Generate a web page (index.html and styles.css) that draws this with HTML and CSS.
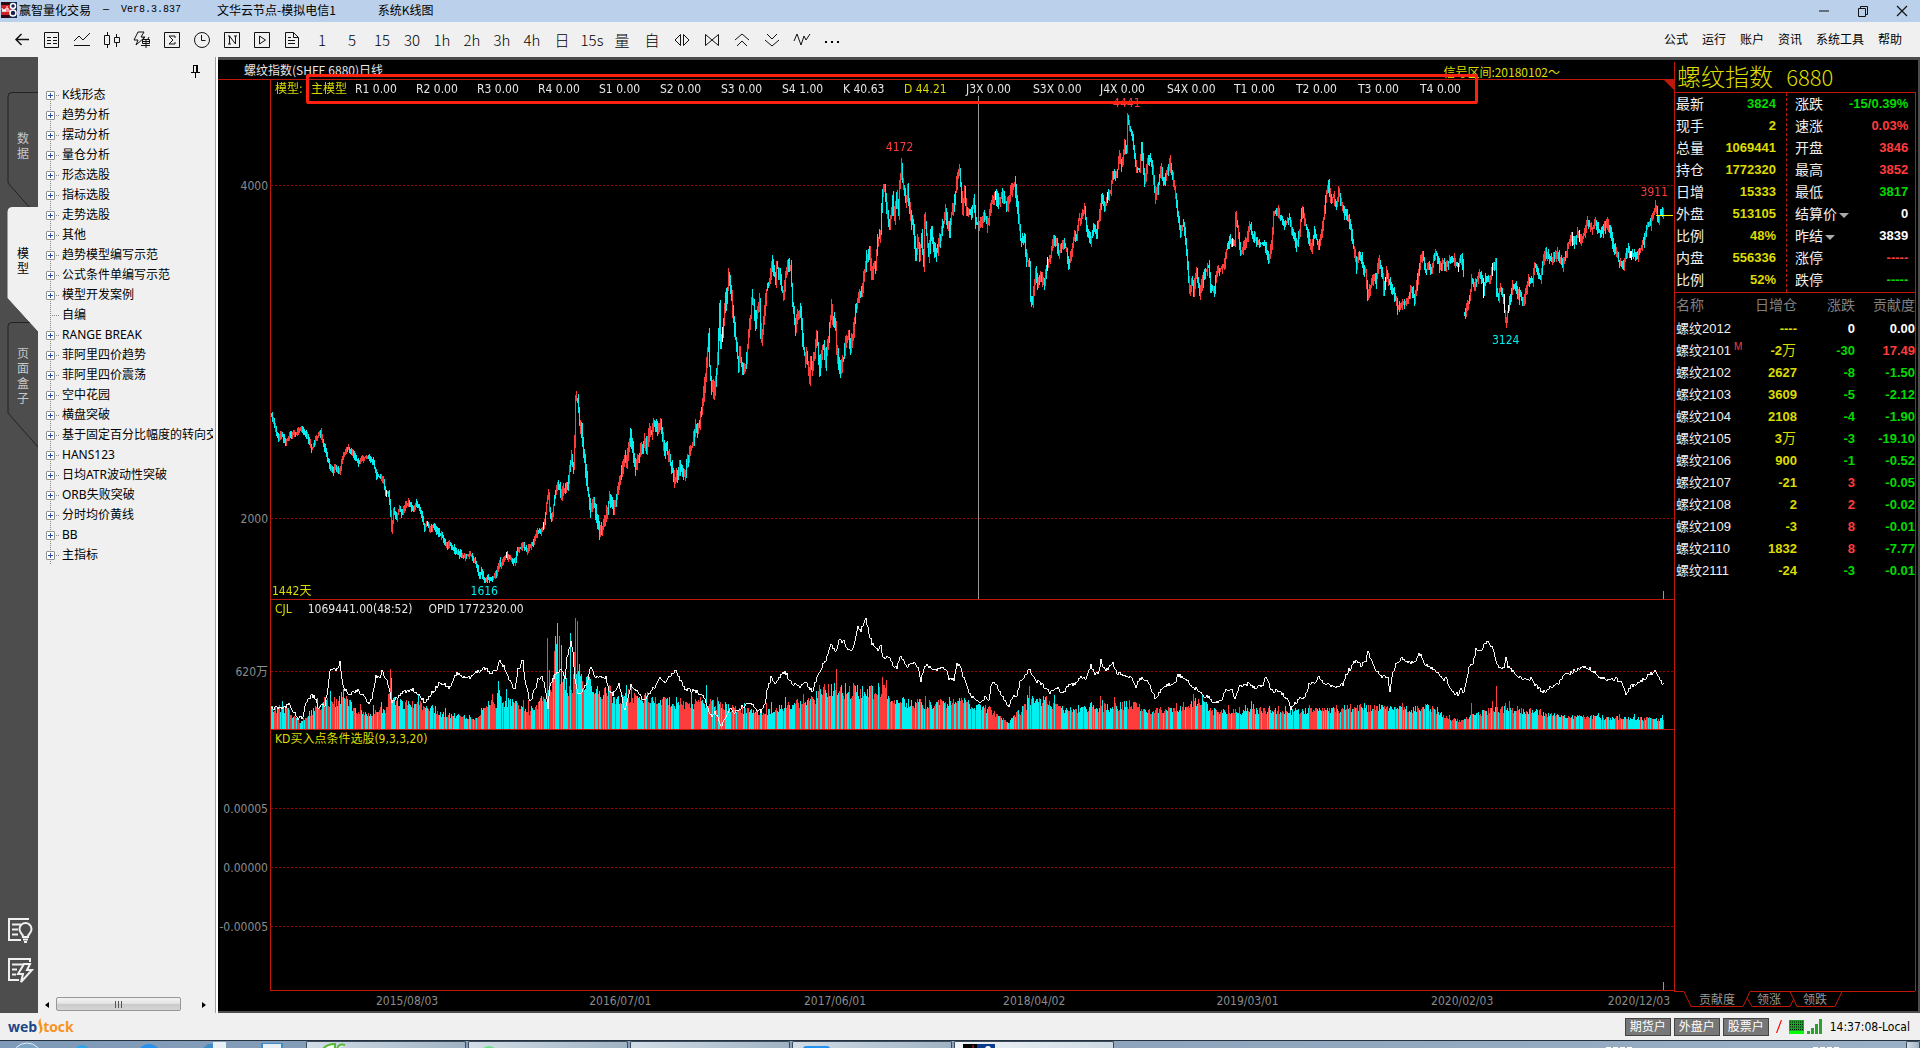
FILE: index.html
```html
<!DOCTYPE html>
<html lang="zh-CN">
<head>
<meta charset="utf-8">
<title>赢智量化交易</title>
<link rel="stylesheet" href="styles.css">
</head>
<body>
<header class="titlebar">
  <svg class="logo" width="16" height="16" viewBox="0 0 16 16"><rect width="16" height="16" fill="#16244f"/><rect y="3" width="10" height="10" fill="#d3202a"/><path d="M0 0h9v3H0zM0 13h8v3H0z" fill="#280c14"/><path d="M1 6l1 4 1-3 1 3 1-4M6 4v6M6 7q2-1 2 1v2" stroke="#fff" fill="none"/><circle cx="12" cy="4" r="2.500" stroke="#fff" fill="none" stroke-width="1.500"/><circle cx="12" cy="11" r="3" stroke="#fff" fill="none" stroke-width="1.500"/></svg>
  <span class="app-name">赢智量化交易</span><span class="app-version">— &nbsp;Ver8.3.837</span><span class="node-name">文华云节点-模拟电信1</span><span class="view-name">系统K线图</span>
  <div class="window-buttons">
    <button aria-label="最小化"><svg width="12" height="12"><path d="M1 6h10" stroke="#111"/></svg></button>
    <button aria-label="还原"><svg width="12" height="12"><path d="M1.500 3.500h7v8h-7zM3.500 3.500v-2h7v8h-2" fill="none" stroke="#111"/></svg></button>
    <button aria-label="关闭"><svg width="12" height="12"><path d="M1 1l10 10M11 1L1 11" stroke="#111" stroke-width="1.200"/></svg></button>
  </div>
</header>

<nav class="toolbar">
  <div class="tools">
    <button aria-label="返回"><svg width="18" height="18"><path d="M3 8.500h13M8.500 3L3 8.500l5.500 5.500" class="ink wide"/></svg></button>
    <button aria-label="报价"><svg width="18" height="18"><path d="M1.500 1.500h14v15h-14zM4 6.500h4M10 6.500h4M4 9.500h4M10 9.500h4M4 12.500h4M10 12.500h4" class="ink"/></svg></button>
    <button aria-label="分时"><svg width="18" height="18"><path d="M1 10l5-5 4 4 7-7M1 14.500h16" class="ink"/></svg></button>
    <button aria-label="K线"><svg width="18" height="18"><path d="M1.500 4.500h5v9h-5zM4.500 1v3M4.500 13v4M11.500 6.500h5v5h-5zM13.500 3v3M13.500 12v4" class="ink"/></svg></button>
    <button aria-label="闪电下单"><svg width="18" height="18"><path d="M5 1h6L8 6h4L3 14l2-5H1zM9.500 8.500h7v4h-7zM9.500 10.500h7M13 8v9M8 14.500h9M10 6l1 2M16 6l-1 2" class="ink"/></svg></button>
    <button aria-label="求和"><svg width="18" height="18"><path d="M1.500 1.500h15v15h-15zM12 7V5H6l4 4-4 4h6v-2" class="ink"/></svg></button>
    <button aria-label="时钟"><svg width="18" height="18"><circle cx="9" cy="9" r="7.500" class="ink"/><path d="M8.500 4v5.500h4" class="ink"/></svg></button>
    <button aria-label="新建"><svg width="18" height="18"><path d="M1.500 1.500h15v15h-15zM6.500 13V5l6 8V5M5 5h2M11 5h3M5 13h3" class="ink"/></svg></button>
    <button aria-label="播放"><svg width="18" height="18"><path d="M1.500 1.500h15v15h-15zM6.500 5v8l6-4z" class="ink"/></svg></button>
    <button aria-label="文档"><svg width="18" height="18"><path d="M2.500 1.500h8l5 5v10h-13zM10.500 1.500v5h5M5 6.500h3M5 9.500h7M5 12.500h7" class="ink"/></svg></button>
    <button>1</button><button>5</button><button>15</button><button>30</button><button>1h</button><button>2h</button><button>3h</button><button>4h</button><button>日</button><button>15s</button><button>量</button><button>自</button>
    <button aria-label="放大"><svg width="18" height="18"><path d="M7.500 3.500v11L2 9zM10.500 3.500v11L16 9z" class="ink"/></svg></button>
    <button aria-label="缩小"><svg width="18" height="18"><path d="M2.500 3.500v11L9 9zM15.500 3.500v11L9 9z" class="ink"/></svg></button>
    <button aria-label="上移"><svg width="18" height="18"><path d="M2 9l7-6 7 6M4 15l5-5 5 5" class="ink"/></svg></button>
    <button aria-label="下移"><svg width="18" height="18"><path d="M4 3l5 5 5-5M2 9l7 6 7-6" class="ink"/></svg></button>
    <button aria-label="指标"><svg width="18" height="18"><path d="M1 10l3-7 4 11 3-9 2 4 4-6" class="ink"/></svg></button>
    <button aria-label="更多"><svg width="18" height="18"><path d="M2 10h2v2H2zM8 10h2v2H8zM14 10h2v2h-2z"/></svg></button>
  </div>
  <div class="menu"><a href="#">公式</a><a href="#">运行</a><a href="#">账户</a><a href="#">资讯</a><a href="#">系统工具</a><a href="#">帮助</a></div>
</nav>

<main class="workspace">
  <aside class="rail">
    <button class="rail-tab"><svg class="rail-shape" width="38" height="126"><path d="M38 .5H12q-4 0-4 4V91l30 34"/></svg><span>数据</span></button>
    <button class="rail-tab active"><svg class="rail-shape" width="38" height="126"><path d="M39 .5H12q-4 0-4 4V91l31 34z"/></svg><span>模型</span></button>
    <button class="rail-tab"><svg class="rail-shape" width="38" height="126"><path d="M38 .5H12q-4 0-4 4V91l30 34"/></svg><span>页面盒子</span></button>
    <div class="rail-tools">
      <button aria-label="提示"><svg width="26" height="26"><path d="M13 22H1V1h20M4 6.500h9M4 11.500h6M4 16.500h6"/><path d="M15 19q0-2-2-4a6 6 0 1 1 9 0q-2 2-2 4zM15 21.500h5M16 24h3"/></svg></button>
      <button aria-label="快速"><svg width="26" height="26"><path d="M11 22H1V1h21v3M4 6.500h12M4 11.500h5M4 16.500h4"/><path d="M16 6h6l-3 6h5L13 24l2-8h-5z"/></svg></button>
    </div>
  </aside>

  <section class="tree-panel">
    <div class="tree-head"><button aria-label="固定"><svg width="9" height="13"><path d="M2.500 0v7M0 7.500h9M4.500 8v5M2 .5h5" stroke="#000"/><path d="M6 0v7" stroke="#000" stroke-width="2"/></svg></button></div>
    <ul class="tree">
      <li><button>+</button>K线形态</li><li><button>+</button>趋势分析</li><li><button>+</button>摆动分析</li><li><button>+</button>量仓分析</li><li><button>+</button>形态选股</li><li><button>+</button>指标选股</li><li><button>+</button>走势选股</li><li><button>+</button>其他</li><li><button>+</button>趋势模型编写示范</li><li><button>+</button>公式条件单编写示范</li><li><button>+</button>模型开发案例</li><li class="leaf">自编</li><li><button>+</button>RANGE BREAK</li><li><button>+</button>菲阿里四价趋势</li><li><button>+</button>菲阿里四价震荡</li><li><button>+</button>空中花园</li><li><button>+</button>横盘突破</li><li><button>+</button>基于固定百分比幅度的转向交易</li><li><button>+</button>HANS123</li><li><button>+</button>日均ATR波动性突破</li><li><button>+</button>ORB失败突破</li><li><button>+</button>分时均价黄线</li><li><button>+</button>BB</li><li><button>+</button>主指标</li>
    </ul>
    <div class="scrollbar"><button aria-label="向左"><svg width="4" height="6"><path d="M4 0v6L0 3z"/></svg></button><div class="track"><div class="thumb"><i></i><i></i><i></i></div></div><button aria-label="向右"><svg width="4" height="6"><path d="M0 0v6l4-3z"/></svg></button></div>
  </section>

  <section class="chart">
    <div class="chart-head"><span>螺纹指数(SHFE 6880)日线</span><span class="signal">信号区间:20180102～</span></div>
    <div class="pane price">
      <div class="axis"><span style="top:20.3%">4000</span><span style="top:84.4%">2000</span></div>
      <div class="plot">
        <i class="grid" style="top:20.3%"></i><i class="grid" style="top:84.4%"></i>
        <canvas id="price"></canvas>
        <div class="model-row"><b class="model-title">模型:</b><b class="model-name">主模型</b><span>R1 0.00</span><span>R2 0.00</span><span>R3 0.00</span><span>R4 0.00</span><span>S1 0.00</span><span>S2 0.00</span><span>S3 0.00</span><span>S4 1.00</span><span>K 40.63</span><span class="mid yellow">D 44.21</span><span class="long">J3X 0.00</span><span class="long">S3X 0.00</span><span class="long">J4X 0.00</span><span class="long">S4X 0.00</span><span class="mid">T1 0.00</span><span class="mid">T2 0.00</span><span class="mid">T3 0.00</span><span class="mid">T4 0.00</span></div>
        <i class="crosshair"></i>
        <span class="mark up" style="left:44.8%;top:13%">4172</span>
        <span class="mark up" style="left:61%;top:4.400%">4441</span>
        <span class="mark up" style="left:98.600%;top:21.500%">3911</span>
        <span class="mark down" style="left:88%;top:50.100%">3124</span>
        <span class="mark down" style="left:15.200%;top:98.400%">1616</span>
        <span class="days">1442天</span>
        <i class="last-price"></i><i class="tick"></i><i class="corner"></i>
      </div>
    </div>
    <div class="pane volume">
      <div class="axis"><span style="top:55.400%">620万</span></div>
      <div class="plot">
        <i class="grid" style="top:55.400%"></i><canvas id="volume"></canvas>
        <div class="legend"><span class="yellow">CJL</span><span>1069441.00(48:52)</span><span>OPID 1772320.00</span></div>
      </div>
    </div>
    <div class="pane kd">
      <div class="axis"><span style="top:30.300%">0.00005</span><span style="top:53%">0.00000</span><span style="top:75.500%">-0.00005</span></div>
      <div class="plot">
        <i class="grid" style="top:30%"></i><i class="grid" style="top:52.700%"></i><i class="grid" style="top:75.200%"></i>
        <div class="legend"><span class="yellow">KD买入点条件选股(9,3,3,20)</span></div><i class="tick"></i>
      </div>
    </div>
    <div class="dates"><span style="left:9.700%">2015/08/03</span><span style="left:24.900%">2016/07/01</span><span style="left:40.200%">2017/06/01</span><span style="left:54.400%">2018/04/02</span><span style="left:69.600%">2019/03/01</span><span style="left:84.900%">2020/02/03</span><span style="left:97.500%">2020/12/03</span></div>
    <div class="highlight"></div>
  </section>

  <section class="quote">
    <h1>螺纹指数 <span>6880</span></h1>
    <div class="quote-body">
      <div class="stats">
        <dl>
          <dt>最新</dt><dd class="green">3824</dd><dt>现手</dt><dd>2</dd><dt>总量</dt><dd>1069441</dd><dt>持仓</dt><dd>1772320</dd><dt>日增</dt><dd>15333</dd><dt>外盘</dt><dd>513105</dd><dt>比例</dt><dd>48%</dd><dt>内盘</dt><dd>556336</dd><dt>比例</dt><dd>52%</dd>
        </dl>
        <dl>
          <dt>涨跌</dt><dd class="green">-15/0.39%</dd><dt>速涨</dt><dd class="red">0.03%</dd><dt>开盘</dt><dd class="red">3846</dd><dt>最高</dt><dd class="red">3852</dd><dt>最低</dt><dd class="green">3817</dd><dt>结算价<i class="drop"></i></dt><dd class="white">0</dd><dt>昨结<i class="drop"></i></dt><dd class="white">3839</dd><dt>涨停</dt><dd class="red">-----</dd><dt>跌停</dt><dd class="green">-----</dd>
        </dl>
      </div>
      <table class="contracts">
        <thead><tr><th>名称</th><th>日增仓</th><th>涨跌</th><th>贡献度</th></tr></thead>
        <tbody>
          <tr><td>螺纹2012</td><td>----</td><td class="white">0</td><td class="white">0.00</td></tr>
          <tr><td>螺纹2101<sup>M</sup></td><td>-2<span class="wan">万</span></td><td class="green">-30</td><td class="red">17.49</td></tr>
          <tr><td>螺纹2102</td><td>2627</td><td class="green">-8</td><td class="green">-1.50</td></tr>
          <tr><td>螺纹2103</td><td>3609</td><td class="green">-5</td><td class="green">-2.12</td></tr>
          <tr><td>螺纹2104</td><td>2108</td><td class="green">-4</td><td class="green">-1.90</td></tr>
          <tr><td>螺纹2105</td><td>3<span class="wan">万</span></td><td class="green">-3</td><td class="green">-19.10</td></tr>
          <tr><td>螺纹2106</td><td>900</td><td class="green">-1</td><td class="green">-0.52</td></tr>
          <tr><td>螺纹2107</td><td>-21</td><td class="red">3</td><td class="green">-0.05</td></tr>
          <tr><td>螺纹2108</td><td>2</td><td class="red">2</td><td class="green">-0.02</td></tr>
          <tr><td>螺纹2109</td><td>-3</td><td class="red">8</td><td class="green">-0.01</td></tr>
          <tr><td>螺纹2110</td><td>1832</td><td class="red">8</td><td class="green">-7.77</td></tr>
          <tr><td>螺纹2111</td><td>-24</td><td class="green">-3</td><td class="green">-0.01</td></tr>
        </tbody>
      </table>
    </div>
    <div class="quote-tabs">
      <svg class="tab-lines" width="242" height="20"><path d="M0 .5h10l7 15h52l7-15h165M73 7l5 8.500h38l4-8M116 .5l7 15h38l7-15"/></svg>
      <button>贡献度</button><button>领涨</button><button>领跌</button>
    </div>
  </section>
</main>

<footer class="statusbar">
  <div class="brand"><span>web</span><svg width="6" height="17"><path d="M4 0Q0 3 2 7t0 9q5-3 3-8T4 0" fill="#f7941d"/></svg><em>tock</em></div>
  <div class="accounts"><button>期货户</button><button>外盘户</button><button>股票户</button></div>
  <svg class="slash" width="6" height="13"><path d="M5.500 0L.5 13" stroke="#f00" stroke-width="1.200"/></svg>
  <svg width="34" height="16"><rect y="1" width="15" height="14" fill="#1fa02a"/><path d="M1 3h13M1 5.500h13M1 8h13M1 10.500h13" stroke="#001800" stroke-dasharray="1 1"/><rect y="12" width="15" height="3" fill="#0f0"/><path d="M19.500 15v-3M23.500 15V9M27.500 15V5M31.500 15V0" stroke="#2ca02c" stroke-width="3"/></svg>
  <span class="time">14:37:08-Local</span>
</footer>
<div class="taskbar">
  <svg class="launch" width="306" height="7"><circle cx="27" cy="17" r="15" fill="#7da4c4" stroke="#e4eef8"/><circle cx="82" cy="13" r="9" fill="#2fa4ec"/><circle cx="149" cy="15" r="12" fill="#2690ee"/><path d="M203 7l5-4h8v4zM261 2h22v5h-22z" fill="#3d8cc8"/><path d="M213 1h13v6h-13zM263 3h18v4h-18z" fill="#e8f0f6"/></svg>
  <button aria-label="窗口一"><svg width="42" height="7"><path d="M16 7q4-5 12-5v5zM30 7q2-6 8-4" fill="#fff" stroke="#58b736" stroke-width="2"/></svg></button>
  <button aria-label="窗口二"><svg width="30" height="7"><circle cx="20" cy="13" r="9" fill="#6fe08a"/></svg></button>
  <button aria-label="窗口三"></button>
  <button aria-label="窗口四"><svg width="40" height="7"><rect x="10" y="4" width="27" height="9" rx="3" fill="#2492f0"/></svg></button>
  <button class="current" aria-label="窗口五"><svg width="42" height="7"><rect x="8" y="2" width="14" height="6"/><path d="M22 2h18v6H22z" fill="#0a3b8c"/><circle cx="33" cy="7" r="3" fill="#fff"/><path d="M18 3v5" stroke="#d24"/></svg></button>
  <svg class="tray" width="300" height="7"><path d="M0 6.500h26M207 6.500h26" stroke="#fff" stroke-dasharray="5 2"/></svg>
  <button class="desktop" aria-label="显示桌面"></button>
</div>
<script src="chart.js"></script>
</body>
</html>
```
FILE: styles.css
```css
* { box-sizing: border-box; }
body {
  margin: 0;
  min-height: 100vh;
  display: flex;
  flex-direction: column;
  font: 12px/16px "DejaVu Sans Condensed", "Noto Sans CJK SC", sans-serif;
  background: #f0f0f0;
  color: #000;
}
button { font: inherit; color: inherit; background: none; border: 0; padding: 0; margin: 0; display: flex; align-items: center; justify-content: center; }
a { color: inherit; text-decoration: none; }
i { font-style: normal; }
.yellow { color: #dcdc00; }

.titlebar { display: flex; align-items: center; height: 22px; padding: 0 5px 2px 1px; background: #bbd0ea; font-family: "Noto Sans CJK SC", sans-serif; }
.app-name { margin-left: 2px; }
.app-version { margin-left: 12px; font-family: "Liberation Mono", monospace; font-size: 10px; }
.node-name { margin-left: 36px; }
.view-name { margin-left: 42px; }
.window-buttons { margin-left: auto; display: flex; padding-top: 2px; }
.window-buttons button { width: 26px; margin-left: 13px; }

.toolbar { display: flex; align-items: center; justify-content: space-between; height: 35px; padding: 0 18px 0 7px; background: #f0f0f0; }
.tools { display: flex; }
.tools button { width: 30px; height: 28px; font: 300 15px/28px "Noto Sans CJK SC", sans-serif; }
.ink { fill: none; stroke: #111; }
.wide { stroke-width: 1.5; }
.menu { display: flex; gap: 14px; }

.workspace { flex: 1; display: flex; min-height: 0; background: #4d4d4d; }

.rail { width: 38px; flex: none; display: flex; flex-direction: column; padding-top: 35px; }
.rail-tab { position: relative; height: 126px; margin-bottom: -11px; padding: 0 0 16px 8px; color: #c8c8c8; line-height: 15px; }
.rail-tab span { position: relative; width: 12px; word-break: break-all; }
.rail-shape { position: absolute; left: 0; top: 0; fill: #4d4d4d; stroke: #222; }
.rail-tab.active { z-index: 1; color: #000; }
.active .rail-shape { fill: #f0f0f0; stroke: #f0f0f0; }
.rail-tools { margin-top: auto; padding: 0 0 29px 8px; display: flex; flex-direction: column; gap: 14px; }
.rail-tools button { justify-content: flex-start; }
.rail-tools svg { fill: none; stroke: #f0f0f0; stroke-width: 2; }

.tree-panel { width: 180px; flex: none; display: flex; flex-direction: column; background: #f0f0f0; border-right: 2px solid #fff; box-shadow: inset -1px 0 #a0a0a0; }
.tree-head { height: 28px; padding: 8px 16px 0; display: flex; justify-content: flex-end; align-items: flex-start; }
.tree { flex: 1; list-style: none; margin: 0 3px 0 0; padding: 0 0 0 8px; font-family: "Noto Sans", "Noto Sans CJK SC", sans-serif; overflow: hidden; }
.tree li { display: flex; align-items: center; height: 20px; white-space: nowrap; background: repeating-linear-gradient(#888 0 1px, transparent 1px 2px) 4px 0 / 1px 100% no-repeat, repeating-linear-gradient(90deg, #888 0 1px, transparent 1px 2px) 4px 10px / 10px 1px no-repeat; }
.tree li:first-child { background-position: 4px 10px; }
.tree li button { width: 9px; height: 9px; flex: none; margin-right: 7px; border: 1px solid #919191; border-radius: 1px; background: linear-gradient(#2b4f9e, #2b4f9e) center / 5px 1px no-repeat, linear-gradient(#2b4f9e, #2b4f9e) center / 1px 5px no-repeat, #fff; font-size: 0; }
.tree .leaf { padding-left: 16px; }
.scrollbar { display: flex; height: 17px; margin: 0 3px 0 0; background: #f0f0f0; }
.scrollbar button { width: 18px; }
.track { flex: 1; padding: 1px 0; }
.thumb { width: 125px; height: 14px; border: 1px solid #979797; border-radius: 2px; background: linear-gradient(#f3f3f3, #e4e4e4 45%, #cacaca 50%, #d6d6d6); display: flex; gap: 2px; align-items: center; justify-content: center; }
.thumb i { width: 1px; height: 7px; background: #555; }

.chart { position: relative; flex: 1; min-width: 0; margin: 3px 0 2px; display: grid; grid-template-rows: 19px 521fr 130fr 261fr 20px; background: #000; color: #e6e6e6; }
.chart-head { display: flex; justify-content: space-between; padding: 2px 114px 0 26px; }
.chart-head span { font-family: "Noto Sans CJK SC", sans-serif; line-height: 16px; white-space: nowrap; }
.chart-head .signal { color: #dcdc00; line-height: 20px; }
.pane { display: grid; grid-template-columns: 52px 1fr; min-height: 0; }
.pane.price { border-top: 1px solid #c01808; }
.axis { position: relative; color: #8c8c8c; }
.axis span { position: absolute; right: 2px; transform: translateY(-50%); }
.plot { position: relative; min-width: 0; border-left: 1px solid #c01808; border-bottom: 1px solid #c01808; }
canvas { position: absolute; left: 0; top: 0; width: 100%; height: 100%; }
.grid { position: absolute; left: 0; right: 0; height: 1px; background: repeating-linear-gradient(90deg, #900 0 2px, transparent 2px 4px); }
.model-row { position: relative; display: flex; padding: 1px 0 0 4px; white-space: nowrap; }
.model-row b { font-weight: 400; color: #dcdc00; }
.model-row .model-title { width: 36px; }
.model-row .model-name { width: 44px; }
.model-row span { width: 61px; }
.model-row .mid { width: 62px; }
.model-row .long { width: 67px; }
.crosshair { position: absolute; left: 50.4%; top: 16px; bottom: 0; width: 1px; background: #999; }
.mark { position: absolute; transform: translate(-50%, -50%); }
.up { color: #ff3c3c; }
.down { color: #00f0f0; }
.days { position: absolute; left: 1px; bottom: 0; color: #dcdc00; }
.last-price { position: absolute; right: 1px; top: 26%; width: 17px; height: 1px; background: #ff0; }
.tick { position: absolute; right: 10px; bottom: 0; width: 1px; height: 8px; background: #999; }
.corner { position: absolute; right: 0; top: 0; border: 5px solid transparent; border-top-color: #c01808; border-right-color: #c01808; }
.legend { position: relative; display: flex; gap: 16px; padding: 1px 0 0 4px; }
.dates { position: relative; margin-left: 53px; color: #8c8c8c; }
.dates span { position: absolute; top: 2px; transform: translateX(-50%); }
.highlight { position: absolute; left: 88px; right: 196px; top: 14px; height: 30px; border: 3px solid #ff2010; border-radius: 2px; }

.quote { width: 244px; flex: none; margin: 3px 2px 2px 0; display: flex; flex-direction: column; background: #000; color: #f0f0f0; font-family: "Noto Sans CJK SC", sans-serif; }
.quote h1 { margin: 2px 0 0; height: 30px; padding-left: 2px; font-size: 24px; font-weight: 300; line-height: 28px; color: #dcdc00; border-left: 1px solid #c01808; }
.quote h1 span { font-size: 22px; margin-left: 8px; }
.quote-body { flex: 1; margin-right: 2px; border: 1px solid #c01808; border-bottom: 0; }
.stats { display: grid; grid-template-columns: 111px 1fr; border-bottom: 1px solid #c01808; height: 200px; }
dl { margin: 0; padding: 0 10px 0 1px; display: grid; grid-template-columns: auto 1fr; grid-auto-rows: 22px; align-items: center; }
dl + dl { border-left: 1px dashed #c01808; padding-left: 8px; }
dt { font-size: 14px; display: flex; align-items: center; white-space: nowrap; height: 16px; padding-bottom: 2px; }
dd { margin: 0; text-align: right; font: bold 13px/16px "Liberation Sans", sans-serif; color: #dcdc00; }
.drop { border: 5px solid transparent; border-top-color: #aaa; border-bottom: 0; margin: 5px 0 0 2px; }
.contracts { width: 100%; table-layout: fixed; border-collapse: collapse; font: bold 13px/22px "Liberation Sans", "Noto Sans CJK SC", sans-serif; }
.contracts th { padding: 0 0 3px; height: 25px; text-align: right; color: #808080; font: 400 14px/22px "Noto Sans CJK SC", sans-serif; }
.contracts th:nth-child(2) { width: 58px; }
.contracts th:nth-child(3) { width: 58px; }
.contracts th:nth-child(4) { width: 60px; }
.contracts td { padding: 0; height: 22px; text-align: right; color: #dcdc00; }
.contracts th:first-child, .contracts td:first-child { text-align: left; padding-left: 1px; }
.contracts td:first-child { color: #f0f0f0; font-weight: 400; white-space: nowrap; }
sup { font-size: 10px; line-height: 10px; color: #ff3c3c; margin-left: 3px; }
.wan { font-size: 14px; font-weight: 400; line-height: 16px; margin-right: 1px; }
.green, .contracts td.green { color: #00dc00; }
.red, .contracts td.red { color: #ff3c3c; }
.white, .contracts td.white { color: #fff; }
.quote-tabs { position: relative; display: flex; gap: 22px; height: 20px; padding-left: 25px; color: #999; }
.quote-tabs button { position: relative; height: 16px; }
.tab-lines { position: absolute; left: 0; top: 0; fill: none; stroke: #c01808; }

.statusbar { display: flex; align-items: center; height: 27px; padding: 0 10px 0 8px; background: #f0f0f0; }
.brand { display: flex; align-items: center; margin-right: auto; font: bold 14px/18px "Open Sans", sans-serif; color: #1b4788; }
.brand em { font-style: normal; color: #f7941d; }
.accounts { display: flex; gap: 3px; }
.accounts button { width: 46px; height: 18px; border: 1px solid #444; background: #777; color: #fff; }
.slash { margin: 0 7px 0 7px; }
.time { margin-left: 7px; }

.taskbar { display: flex; height: 8px; flex: none; overflow: hidden; border-top: 1px solid #24303c; background: linear-gradient(90deg, #7f9ab8, #8ca2ba 50%, #9ab0c6); }
.taskbar button { width: 160px; height: 7px; margin-right: 2px; justify-content: flex-start; border: 1px solid #3c4c5e; border-bottom: 0; border-radius: 2px 2px 0 0; background: linear-gradient(90deg, #d2dde6, #9fb2c3); }
.taskbar .current { background: linear-gradient(90deg, #f0f4f8, #ccd8e2); }
.tray { margin-left: auto; }
.taskbar .desktop { width: 14px; margin: 0; }
```
FILE: chart.js
```js
// Key points of each series, as x,y pairs on a 1404-unit wide time axis that starts at 270.
const PRICE = [271,415,276,432,278,438,281,433,285,442,289,435,296,433,300,428,306,435,311,449,315,440,320,432,322,440,326,455,329,465,332,472,335,466,339,472,342,457,347,447,352,453,358,463,362,458,366,457,372,460,376,475,383,480,385,493,388,492,390,513,391,530,393,510,396,518,399,507,401,513,405,505,408,502,413,510,416,503,421,513,424,528,426,522,430,530,432,525,442,537,447,547,449,543,456,552,465,556,470,554,474,560,479,575,481,570,484,581,487,578,492,578,496,573,499,560,500,566,503,560,506,553,508,557,514,562,517,550,523,545,526,550,533,542,537,530,540,533,544,523,546,503,548,493,549,508,551,520,554,497,557,483,559,488,562,493,567,485,571,457,573,467,574,440,575,397,577,400,579,423,581,430,584,460,587,488,590,510,593,503,596,515,599,532,602,528,606,513,609,497,612,508,615,505,619,480,624,457,626,462,630,435,633,455,635,467,640,450,644,440,646,447,649,428,651,433,654,422,657,428,660,425,664,453,666,447,669,460,674,480,679,467,684,475,689,453,692,443,695,427,697,432,702,405,705,373,708,335,709,365,711,388,712,385,713,395,715,380,717,357,719,307,720,345,722,333,725,295,726,303,728,273,729,283,731,293,732,313,734,330,736,345,738,367,739,353,743,372,746,360,748,335,750,315,751,297,753,303,755,323,757,307,759,300,760,330,761,338,764,310,766,290,769,282,772,260,773,270,775,280,776,263,778,273,779,272,781,287,783,297,785,275,787,262,790,267,792,304,795,328,797,316,800,308,802,341,805,361,806,353,809,377,810,361,811,369,814,353,816,333,819,369,821,353,823,345,825,363,828,337,831,304,832,316,835,325,836,349,839,369,843,358,845,341,848,333,850,347,853,329,855,308,859,292,861,294,864,271,866,257,869,251,871,276,874,263,875,267,877,241,880,231,882,190,884,188,886,206,889,227,892,198,894,218,896,194,898,214,899,182,901,165,902,178,905,202,907,190,910,218,913,227,915,259,917,239,919,255,921,235,923,265,924,217,926,235,928,255,931,227,933,247,935,255,938,243,941,231,945,212,949,233,951,214,954,200,956,182,959,169,960,182,962,210,964,190,966,210,971,214,973,200,975,222,978,224,981,222,984,214,987,224,991,202,994,196,998,200,1002,196,1007,204,1011,188,1014,184,1016,198,1020,239,1024,239,1026,259,1029,263,1030,300,1032,300,1035,271,1037,286,1040,275,1043,284,1046,267,1050,255,1053,237,1056,243,1058,253,1063,241,1066,251,1068,265,1071,251,1074,233,1076,237,1078,220,1081,218,1084,208,1086,227,1090,241,1093,227,1096,233,1099,214,1101,198,1104,206,1108,194,1110,192,1112,173,1116,176,1119,155,1121,165,1124,143,1126,150,1127,118,1130,130,1132,137,1134,157,1136,169,1139,169,1141,143,1144,182,1146,167,1149,157,1152,171,1155,198,1158,182,1160,169,1163,182,1166,173,1169,161,1172,178,1175,194,1177,212,1180,233,1183,222,1186,251,1189,293,1191,280,1193,290,1196,271,1199,294,1203,276,1208,265,1210,288,1214,290,1216,271,1221,267,1224,263,1226,249,1230,239,1234,243,1235,216,1237,227,1240,253,1243,247,1246,241,1249,224,1252,235,1255,239,1259,243,1264,243,1268,261,1271,243,1273,212,1277,208,1280,218,1284,224,1289,218,1292,233,1296,245,1299,231,1301,208,1303,216,1307,233,1311,249,1314,231,1318,247,1322,227,1325,198,1328,182,1330,198,1333,196,1336,206,1338,192,1341,204,1344,214,1348,216,1351,235,1353,247,1356,267,1358,255,1361,257,1363,269,1365,271,1367,298,1371,282,1373,276,1375,282,1377,267,1379,261,1382,276,1383,290,1386,271,1388,280,1392,290,1395,300,1397,308,1401,304,1405,302,1408,296,1411,288,1414,300,1417,278,1420,257,1422,255,1425,271,1428,265,1431,271,1433,257,1436,253,1439,267,1443,261,1445,267,1449,259,1453,259,1457,265,1461,257,1463,271,1464,312,1465,313,1467,304,1469,300,1471,280,1473,286,1477,280,1479,273,1482,280,1483,292,1485,276,1489,282,1491,269,1495,263,1496,293,1498,296,1499,290,1501,288,1503,300,1505,322,1507,312,1509,300,1512,286,1515,286,1518,298,1519,292,1523,304,1525,292,1528,280,1532,282,1534,263,1537,271,1540,278,1542,263,1545,251,1548,257,1552,259,1557,253,1562,265,1566,253,1568,243,1571,237,1574,243,1577,231,1580,241,1583,235,1587,222,1591,229,1595,222,1598,231,1602,231,1607,222,1610,233,1612,243,1616,255,1620,265,1623,265,1627,249,1630,255,1634,255,1637,257,1642,243,1645,235,1647,222,1650,224,1653,212,1655,206,1656,212,1658,220,1660,210,1663,214];
const INTEREST = [271,708,281,707,289,705,297,718,302,717,305,702,311,695,314,698,317,707,324,705,326,693,329,672,333,667,335,672,339,663,341,678,343,688,349,695,356,690,362,695,368,703,371,700,375,677,379,678,381,672,385,680,388,687,391,703,396,698,401,693,412,690,419,697,424,702,433,690,440,682,448,688,456,673,462,678,471,677,476,672,485,668,489,673,496,670,499,660,504,668,508,680,514,690,517,670,522,660,524,680,529,703,533,692,537,680,541,677,544,687,547,708,549,685,555,673,562,670,564,680,566,657,570,642,572,653,574,680,577,695,581,693,587,680,590,667,594,678,605,677,608,690,612,695,618,685,624,710,630,685,635,690,643,700,648,693,653,688,659,678,664,683,669,675,675,670,680,682,683,688,690,690,696,692,704,697,708,713,712,717,714,712,721,727,724,717,729,708,733,713,739,708,749,703,753,707,760,712,764,703,767,687,770,678,774,682,784,671,791,684,799,687,805,682,811,692,815,680,821,667,825,659,830,643,835,653,838,641,843,641,847,649,852,649,857,627,860,631,865,618,867,629,871,643,877,651,880,643,882,659,887,656,891,663,896,669,899,655,907,667,914,661,917,669,920,680,924,665,934,669,944,668,948,678,953,680,956,663,960,669,964,682,968,692,974,700,979,704,984,698,988,698,991,682,996,686,1000,694,1005,702,1008,708,1011,698,1016,696,1019,682,1024,676,1029,669,1034,680,1041,684,1049,692,1056,688,1062,694,1067,686,1074,684,1079,678,1085,678,1090,665,1094,673,1098,673,1100,660,1104,671,1109,667,1112,662,1116,673,1124,676,1130,676,1135,686,1141,676,1149,686,1155,700,1161,688,1168,684,1174,682,1177,675,1184,678,1191,686,1199,692,1203,698,1208,696,1213,704,1221,698,1225,690,1231,690,1234,698,1239,686,1247,684,1254,688,1262,686,1265,676,1270,690,1277,692,1286,698,1290,708,1294,704,1299,698,1304,698,1308,684,1315,682,1318,676,1324,684,1333,687,1342,684,1347,671,1352,665,1355,659,1360,665,1365,661,1367,651,1371,663,1375,671,1381,676,1387,678,1389,692,1391,676,1395,664,1401,658,1407,663,1413,661,1419,654,1425,665,1432,669,1437,673,1442,680,1446,679,1449,688,1453,692,1457,695,1460,688,1463,692,1466,680,1468,665,1472,663,1475,650,1480,651,1483,645,1487,641,1491,647,1494,657,1498,667,1503,668,1505,657,1507,667,1513,673,1522,679,1530,679,1537,688,1542,692,1548,688,1558,682,1565,675,1573,671,1582,667,1590,669,1597,676,1608,680,1615,679,1620,682,1625,695,1630,686,1640,682,1647,676,1654,671,1658,678,1662,684];
const VOLUME = [271,708,285,708,300,722,310,712,325,700,335,701,343,692,355,711,370,714,385,708,390,692,400,703,412,702,425,705,440,713,460,716,475,718,485,705,500,700,515,702,530,711,545,695,550,688,557,668,560,675,570,690,576,665,580,675,588,680,600,690,620,698,640,695,660,698,680,705,700,701,720,705,740,709,765,712,790,704,815,697,820,689,850,689,875,690,885,685,888,700,910,702,930,703,960,701,990,709,1008,722,1020,710,1030,700,1045,699,1060,708,1090,708,1130,704,1150,709,1175,708,1195,700,1215,711,1260,709,1290,711,1320,709,1330,709,1360,706,1410,709,1430,706,1437,711,1445,717,1460,721,1470,715,1500,708,1510,710,1540,711,1560,716,1600,717,1663,719];
const SPIKES = {390:669,391:678,498:681,499:690,547:638,549:670,554:651,555:636,557:623,559:636,561:645,570:633,574:652,575:618,577:621,579:664,631:684,706:685,882:677,886:680,1029:686,1471:703,1492:701,1496:686,1505:703};
const START = 270, SPAN = 1404, PRICE_TOP = 79, VOLUME_TOP = 600, LAST = 1663;

function sampler(points) {
  let i = 0;
  return x => {
    while (i < points.length - 4 && points[i + 2] < x) i += 2;
    const t = Math.max(0, Math.min(1, (x - points[i]) / (points[i + 2] - points[i])));
    return points[i + 1] + (points[i + 3] - points[i + 1]) * t;
  };
}

function generator(seed) {
  return () => (seed = (seed * 16807) % 2147483647) / 2147483647;
}

function surface(id, height) {
  const canvas = document.getElementById(id);
  canvas.width = canvas.clientWidth;
  canvas.height = canvas.clientHeight;
  const g = canvas.getContext("2d");
  g.scale(canvas.width / (SPAN - 1), canvas.height / height);
  return g;
}

function drawPrice() {
  const g = surface("price", 519), at = sampler(PRICE), random = generator(71);
  let previous = 413;
  for (let x = START + 1; x <= LAST; x++) {
    const y = at(x), size = x < 560 ? 4 : x < 1050 ? 8 : 6;
    const gap = x === 1464;
    const top = (gap ? y : Math.min(y, previous)) - random() * size;
    const bottom = (gap ? y : Math.max(y, previous)) + random() * size;
    const rising = random() < 0.25 ? y > previous : y < previous;
    g.fillStyle = random() < 0.01 ? "#fff" : rising ? "#ff3c3c" : "#00f0f0";
    g.fillRect(x - START - 1, Math.round(top) - PRICE_TOP - 1, 1, Math.round(bottom - top) + 1);
    previous = y;
  }
}

function drawVolume() {
  const g = surface("volume", 129), at = sampler(VOLUME), interest = sampler(INTEREST), random = generator(913);
  let red = true;
  for (let x = START + 1; x <= LAST; x++) {
    if (random() < 0.4) red = !red;
    const base = 729 - at(x), burst = random() < 0.08 ? 1.3 : 1;
    const top = SPIKES[x] || 729 - base * burst * (0.75 + random() * 0.4);
    g.fillStyle = red ? "#ff3c3c" : "#00f0f0";
    g.fillRect(x - START - 1, Math.round(top) - VOLUME_TOP, 1, 729 - Math.round(top));
  }
  g.fillStyle = "#f4f4f4";
  let previous = 708;
  for (let x = START + 1; x <= LAST; x++) {
    const y = Math.round(interest(x) + (random() - 0.5) * 4);
    g.fillRect(x - START - 1, Math.min(y, previous) - VOLUME_TOP, 1, Math.max(1, Math.abs(y - previous)));
    previous = y;
  }
}

function draw() { drawPrice(); drawVolume(); }
draw();
addEventListener("resize", draw);
```
